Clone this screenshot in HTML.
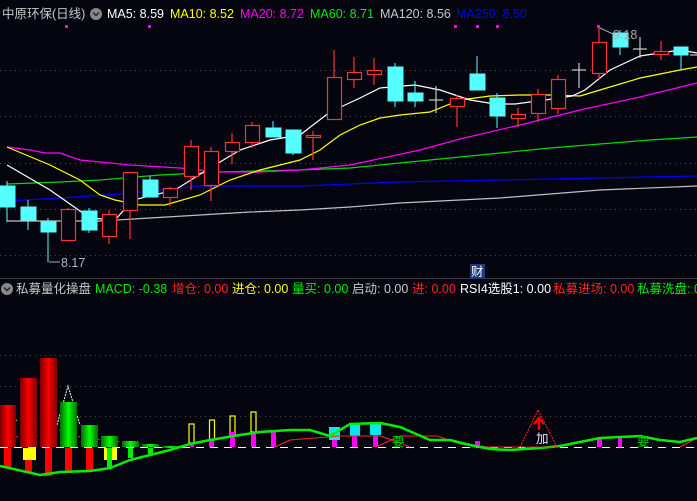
<!DOCTYPE html>
<html><head><meta charset="utf-8"><style>
html,body{margin:0;padding:0;background:#05050f;width:697px;height:501px;overflow:hidden}
svg{display:block}
text{font-family:"Liberation Sans","Noto Sans CJK SC",sans-serif;font-size:12.5px}
</style></head><body>
<svg width="697" height="501" viewBox="0 0 697 501" xmlns="http://www.w3.org/2000/svg">
<defs>
<linearGradient id="rg" x1="0" x2="1" y1="0" y2="0"><stop offset="0" stop-color="#7a0000"/><stop offset="0.5" stop-color="#ff0000"/><stop offset="1" stop-color="#7a0000"/></linearGradient>
<linearGradient id="gg" x1="0" x2="1" y1="0" y2="0"><stop offset="0" stop-color="#006a00"/><stop offset="0.5" stop-color="#00ff00"/><stop offset="1" stop-color="#006a00"/></linearGradient>
</defs>
<rect width="697" height="501" fill="#05050f"/>
<!-- grid -->
<g stroke="#4a4a55" stroke-width="1" stroke-dasharray="1,4">
<line x1="0" y1="70.5" x2="697" y2="70.5"/><line x1="0" y1="116.5" x2="697" y2="116.5"/>
<line x1="0" y1="163.5" x2="697" y2="163.5"/><line x1="0" y1="209.5" x2="697" y2="209.5"/>
<line x1="0" y1="255.5" x2="697" y2="255.5"/>
<line x1="0" y1="355.5" x2="697" y2="355.5"/><line x1="0" y1="386.5" x2="697" y2="386.5"/>
<line x1="0" y1="416.5" x2="697" y2="416.5"/>
</g>
<line x1="0" y1="278.5" x2="697" y2="278.5" stroke="#3a3a48"/>
<!-- header -->
<text x="2" y="18" fill="#c8c8c8">中原环保(日线)</text>
<circle cx="96" cy="14" r="6" fill="#888"/><path d="M93 12.5l3 3 3-3" stroke="#222" stroke-width="1.5" fill="none"/>
<text x="107" y="18" fill="#ffffff">MA5: 8.59</text>
<text x="170" y="18" fill="#ffff00">MA10: 8.52</text>
<text x="240" y="18" fill="#ff00ff">MA20: 8.72</text>
<text x="310" y="18" fill="#00ee00">MA60: 8.71</text>
<text x="380" y="18" fill="#c8c8c8">MA120: 8.56</text>
<text x="456" y="18" fill="#0000ee">MA250: 8.50</text>
<g fill="#ff00ff"><rect x="65" y="25" width="3" height="3"/><rect x="148" y="25" width="3" height="3"/><rect x="454" y="25" width="3" height="3"/><rect x="476" y="25" width="3" height="3"/><rect x="496" y="25" width="3" height="3"/><rect x="597" y="25" width="3" height="3"/></g>
<!-- MA lines -->
<g fill="none" stroke-width="1.2">
<polyline stroke="#c0c0c0" points="7,221 100,221 150,218 200,215 250,212 300,210 350,207 400,203 500,198 600,190 697,186"/>
<polyline stroke="#0000ff" points="7,201 60,198 120,194 200,186 300,186 400,182 500,180 600,178 697,176"/>
<polyline stroke="#00dd00" points="7,184 60,182 100,180 160,175 220,172 300,170 350,168 450,158 550,148 650,140 697,137"/>
<polyline stroke="#ff00ff" points="7,147 30,150 45,153 60,153 80,160 100,162 130,165 180,168 220,172 260,172 300,170 340,166 350,165 420,150 460,139 520,125 580,110 640,97 697,83"/>
<polyline stroke="#ffff00" points="7,147 50,165 80,180 100,195 115,200 140,205 165,205 200,195 230,180 260,170 280,165 300,160 320,150 340,135 360,125 380,118 400,115 430,112 460,100 490,96 520,95 550,95 580,96 600,90 640,78 680,70 697,67"/>
<polyline stroke="#ffffff" points="7,165 50,190 90,218 115,220 133,200 175,190 210,168 240,150 270,140 300,135 330,112 360,98 380,88 415,85 440,90 470,100 495,104 515,104 545,100 572,96 585,90 610,70 640,56 680,50 697,53"/>
</g>
<!-- candles: cyan filled -->
<g stroke="#55ffff" fill="#55ffff" stroke-width="1">
<line x1="7" y1="181" x2="7" y2="222"/><rect x="0" y="186" width="15" height="21"/>
<line x1="28" y1="200" x2="28" y2="230"/><rect x="21" y="207" width="15" height="13"/>
<line x1="48" y1="218" x2="48" y2="262"/><rect x="41" y="222" width="15" height="10"/>
<line x1="89" y1="208" x2="89" y2="233"/><rect x="82" y="211" width="15" height="19"/>
<line x1="150" y1="176" x2="150" y2="197"/><rect x="143" y="180" width="15" height="17"/>
<line x1="273" y1="121" x2="273" y2="137"/><rect x="266" y="128" width="15" height="9"/>
<line x1="293" y1="130" x2="293" y2="155"/><rect x="286" y="130" width="15" height="23"/>
<line x1="395" y1="63" x2="395" y2="107"/><rect x="388" y="67" width="15" height="34"/>
<line x1="415" y1="81" x2="415" y2="107"/><rect x="408" y="93" width="15" height="8"/>
<line x1="477" y1="56" x2="477" y2="90"/><rect x="470" y="74" width="15" height="16"/>
<line x1="497" y1="93" x2="497" y2="128"/><rect x="490" y="98" width="15" height="18"/>
<line x1="620" y1="30" x2="620" y2="55"/><rect x="613" y="33" width="15" height="14"/>
<line x1="681" y1="47" x2="681" y2="70"/><rect x="674" y="47" width="14" height="8"/>
</g>
<!-- red hollow -->
<g stroke="#ff3333" fill="#05050f" stroke-width="1.2">
<line x1="68" y1="208" x2="68" y2="241"/><rect x="61.5" y="209.5" width="14" height="31"/>
<line x1="109" y1="210" x2="109" y2="244"/><rect x="102.5" y="214.5" width="14" height="22"/>
<line x1="130" y1="172" x2="130" y2="239"/><rect x="123.5" y="172.5" width="14" height="38"/>
<line x1="170" y1="187" x2="170" y2="206"/><rect x="163.5" y="188.5" width="14" height="9"/>
<line x1="191" y1="140" x2="191" y2="190"/><rect x="184.5" y="146.5" width="14" height="30"/>
<line x1="211" y1="147" x2="211" y2="201"/><rect x="204.5" y="151.5" width="14" height="34"/>
<line x1="232" y1="133" x2="232" y2="164"/><rect x="225.5" y="142.5" width="14" height="9"/>
<line x1="252" y1="122" x2="252" y2="148"/><rect x="245.5" y="125.5" width="14" height="17"/>
<line x1="313" y1="131" x2="313" y2="160"/><rect x="306.5" y="135.5" width="14" height="2"/>
<line x1="334" y1="50" x2="334" y2="120"/><rect x="327.5" y="77.5" width="14" height="42"/>
<line x1="354" y1="57" x2="354" y2="88"/><rect x="347.5" y="72.5" width="14" height="7"/>
<line x1="374" y1="58" x2="374" y2="85"/><rect x="367.5" y="70.5" width="14" height="4"/>
<line x1="457" y1="95" x2="457" y2="127"/><rect x="450.5" y="98.5" width="14" height="8"/>
<line x1="518" y1="108" x2="518" y2="127"/><rect x="511.5" y="114.5" width="14" height="4"/>
<line x1="538" y1="89" x2="538" y2="122"/><rect x="531.5" y="94.5" width="14" height="19"/>
<line x1="558" y1="75" x2="558" y2="114"/><rect x="551.5" y="79.5" width="14" height="29"/>
<line x1="599" y1="27" x2="599" y2="79"/><rect x="592.5" y="42.5" width="14" height="31"/>
<line x1="661" y1="41" x2="661" y2="60"/><rect x="654.5" y="51.5" width="14" height="3"/>
</g>
<!-- gray crosses -->
<g stroke="#c8c8c8" stroke-width="1.2">
<line x1="436" y1="86" x2="436" y2="113"/><line x1="429" y1="100" x2="443" y2="100"/>
<line x1="579" y1="63" x2="579" y2="88"/><line x1="572" y1="70" x2="586" y2="70"/>
<line x1="640" y1="37" x2="640" y2="58"/><line x1="633" y1="49" x2="647" y2="49"/>
<line x1="697" y1="55" x2="690" y2="55"/>
</g>
<!-- labels -->
<path d="M49 262 L60 262" stroke="#aaa"/><text x="61" y="267" fill="#aabbcc" font-size="12">8.17</text>
<path d="M600 28 L613 34" stroke="#aaa"/><text x="613" y="39" fill="#aaa" font-size="12">9.18</text>
<rect x="470" y="264" width="15" height="15" fill="#1a3c78"/><text x="471" y="276" fill="#fff" font-size="12">财</text>
<!-- lower header -->
<circle cx="7" cy="289" r="6" fill="#888"/><path d="M4 287.5l3 3 3-3" stroke="#222" stroke-width="1.5" fill="none"/>
<text x="16" y="293" fill="#c8c8c8">私募量化操盘</text>
<text x="95" y="293" fill="#00ee00">MACD: -0.38</text>
<text x="172" y="293" fill="#ff2222">增仓: 0.00</text>
<text x="232" y="293" fill="#ffff00">进仓: 0.00</text>
<text x="292" y="293" fill="#00ee00">量买: 0.00</text>
<text x="352" y="293" fill="#c8c8c8">启动: 0.00</text>
<text x="412" y="293" fill="#ff2222">进: 0.00</text>
<text x="460" y="293" fill="#ffffff">RSI4选股1: 0.00</text>
<text x="553" y="293" fill="#ff2222">私募进场: 0.00</text>
<text x="637" y="293" fill="#00ee00">私募洗盘: 0.00</text>
<!-- lower panel -->
<line x1="0" y1="447.5" x2="697" y2="447.5" stroke="#ffffff" stroke-dasharray="8,6"/>
<polyline fill="none" stroke="#ff2222" stroke-width="1" stroke-dasharray="2,2" points="0,437 40,436 60,430 80,437 120,442"/>
<polyline fill="none" stroke="#ffff00" stroke-width="1" stroke-dasharray="2,3" points="0,422 40,418 60,420"/>
<polyline fill="none" stroke="#ffffff" stroke-width="1" stroke-dasharray="2,1" points="57,425 68,386 80,425"/>
<rect x="0" y="405" width="16" height="42" fill="url(#rg)"/>
<rect x="20" y="378" width="17" height="69" fill="url(#rg)"/>
<rect x="40" y="358" width="17" height="89" fill="url(#rg)"/>
<rect x="60" y="402" width="17" height="45" fill="url(#gg)"/>
<rect x="81" y="425" width="17" height="22" fill="url(#gg)"/>
<rect x="101" y="436" width="17" height="11" fill="url(#gg)"/>
<rect x="122" y="441" width="17" height="6" fill="url(#gg)"/>
<rect x="142" y="444" width="17" height="3" fill="url(#gg)"/>
<rect x="162" y="446" width="17" height="2" fill="url(#gg)"/>
<g fill="#ff0000"><rect x="4" y="448" width="7" height="19"/><rect x="25" y="448" width="7" height="24"/><rect x="45" y="448" width="7" height="28"/><rect x="65" y="448" width="7" height="25"/><rect x="86" y="448" width="7" height="24"/></g>
<g fill="#ffff00"><rect x="23" y="448" width="13" height="12"/><rect x="104" y="448" width="13" height="12"/></g>
<g fill="#00ee00"><rect x="107" y="448" width="5" height="20"/><rect x="128" y="448" width="5" height="10"/><rect x="148" y="448" width="5" height="6"/></g>
<g fill="none" stroke="#ffff00" stroke-width="1.2"><rect x="189" y="424" width="5" height="19"/><rect x="209.5" y="420" width="5" height="20"/><rect x="230" y="416" width="5" height="20"/><rect x="251" y="412" width="5" height="20"/></g>
<g fill="#ff00ff"><rect x="190" y="443" width="4" height="4"/><rect x="209" y="440" width="5" height="7"/><rect x="230" y="432" width="5" height="15"/><rect x="251" y="432" width="5" height="15"/><rect x="271" y="430" width="5" height="17"/><rect x="332" y="440" width="5" height="7"/><rect x="352" y="436" width="5" height="11"/><rect x="373" y="435" width="5" height="12"/><rect x="475" y="441" width="5" height="6"/><rect x="597" y="438" width="5" height="9"/><rect x="618" y="437" width="4" height="10"/></g>
<g fill="#00e8f0"><rect x="329" y="427" width="11" height="13"/><rect x="350" y="423" width="10" height="13"/><rect x="370" y="422" width="11" height="13"/></g>
<polyline fill="none" stroke="#ff2222" stroke-width="1" points="376,447 400,436 437,436 460,444 488,447 520,447"/>
<polyline fill="none" stroke="#ff2222" stroke-width="1" points="275,447 290,440 340,436 380,436 395,441 410,447"/>
<polyline fill="none" stroke="#ff2222" stroke-width="1" points="680,447 697,438"/>
<polyline fill="none" stroke="#00ee00" stroke-width="2.5" points="0,466 40,475 60,472 90,471 110,468 130,460 150,455 170,450 190,444 210,440 240,435 260,432 290,430 310,430 330,436 350,424 380,423 400,427 430,440 450,440 470,445 490,449 510,450 540,448 560,446 580,442 600,438 620,437 640,436 660,440 680,442 697,438"/>
<polygon points="538,410 520,447 557,447" fill="none" stroke="#ff2222" stroke-dasharray="2,1"/>
<path d="M539 430 V420 M534 424 L539 418 L544 424" stroke="#ff0000" stroke-width="2.5" fill="none"/>
<text x="536" y="443" fill="#e8e8ff" font-size="11">加</text>
<text x="392" y="446" fill="#00cc00" font-size="11">要</text>
<text x="637" y="446" fill="#00cc00" font-size="11">要</text>
</svg>
</body></html>
